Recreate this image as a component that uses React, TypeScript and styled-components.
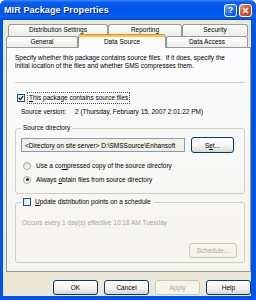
import React from 'react'
import styled, { createGlobalStyle } from 'styled-components'

const GlobalStyle = createGlobalStyle`
  html, body {
    margin: 0;
    padding: 0;
    background: #ffffff;
  }
  body {
    font-family: 'Liberation Sans', Arial, sans-serif;
    font-size: 6.5px;
    color: #000;
  }
`

const Window = styled.div`
  width: 256px;
  height: 300px;
  box-sizing: border-box;
  display: flex;
  flex-direction: column;
  background: #0055e5;
  border-radius: 6px 6px 0 0;
  overflow: hidden;
`

const TitleBar = styled.div`
  height: 20px;
  flex: none;
  display: flex;
  align-items: center;
  padding: 0 4px 0 4px;
  background: linear-gradient(
    to bottom,
    #3d8dff 0%,
    #0a5cf0 12%,
    #0055e8 50%,
    #0061f8 86%,
    #0046cc 100%
  );
`

const Title = styled.span`
  flex: 1;
  color: #fff;
  font-size: 9px;
  font-weight: bold;
  letter-spacing: 0.1px;
  text-shadow: 1px 1px 0 #0a1b8a;
`

const CaptionButton = styled.div<{ $close?: boolean }>`
  width: 13px;
  height: 13px;
  margin-left: 2px;
  box-sizing: border-box;
  border: 1px solid #fff;
  border-radius: 3px;
  display: flex;
  align-items: center;
  justify-content: center;
  color: #fff;
  font-weight: bold;
  font-size: 9px;
  background: ${({ $close }) =>
    $close
      ? 'linear-gradient(135deg, #f0a080 0%, #e05a2c 40%, #c53a10 100%)'
      : 'linear-gradient(135deg, #7ab0ff 0%, #2a72f0 45%, #0a4fd8 100%)'};
`

const Body = styled.div`
  flex: 1;
  margin: 0 5px 4px 3px;
  background: #ece9d8;
  padding: 4px 0 0 3px;
  display: flex;
  flex-direction: column;
`

const TabRow = styled.div<{ $indent?: number; $h: number; $lift?: number }>`
  display: flex;
  align-items: flex-end;
  height: ${({ $h }) => $h}px;
  margin-left: ${({ $indent }) => $indent || 0}px;
  & > div {
    padding-bottom: ${({ $lift }) => $lift || 0}px;
  }
`

const Tab = styled.div<{ $w: number; $active?: boolean }>`
  width: ${({ $w }) => $w}px;
  height: 100%;
  box-sizing: border-box;
  border: 1px solid #919b9c;
  border-bottom: none;
  border-radius: 3px 3px 0 0;
  background: linear-gradient(to bottom, #ffffff, #ecebe6);
  display: flex;
  align-items: center;
  justify-content: center;
  line-height: 8px;
  position: relative;
  ${({ $active }) =>
    $active &&
    `
    height: calc(100% + 3px);
    margin-bottom: -1px;
    z-index: 1;
    background: #fcfcfe;
    border-top: 1px solid #e68b2c;
    box-shadow: inset 0 2px 0 #ffc83c;
    padding-top: 1px;
  `}
`

const Panel = styled.div`
  height: 225px;
  box-sizing: border-box;
  border: 1px solid #919b9c;
  background: linear-gradient(to bottom, #fcfcfe, #f4f3ee);
  padding: 6px 5px 0 8px;
  display: flex;
  flex-direction: column;
`

const Description = styled.p`
  margin: 0;
  line-height: 8px;
`

const Separator = styled.div`
  margin-top: 12px;
  border-top: 1px solid #d0d0bf;
`

const CheckRow = styled.div<{ $top: number; $indent?: number }>`
  display: flex;
  align-items: center;
  height: 9px;
  margin-top: ${({ $top }) => $top}px;
  margin-left: ${({ $indent }) => $indent || 0}px;
`

const CheckBox = styled.div`
  width: 8px;
  height: 8px;
  flex: none;
  box-sizing: border-box;
  border: 1px solid #1c5180;
  background: linear-gradient(135deg, #dcdcd7, #ffffff);
  margin-right: 3px;
  display: flex;
  align-items: center;
  justify-content: center;
`

const Radio = styled.div<{ $checked?: boolean }>`
  width: 8px;
  height: 8px;
  flex: none;
  box-sizing: border-box;
  border-radius: 50%;
  border: 1px solid #a9a99f;
  background: linear-gradient(135deg, #dcdcd7, #ffffff);
  margin-right: 4px;
  display: flex;
  align-items: center;
  justify-content: center;
  &::after {
    content: '';
    display: ${({ $checked }) => ($checked ? 'block' : 'none')};
    width: 3px;
    height: 3px;
    border-radius: 50%;
    background: #2a2a2a;
  }
`

const Label = styled.span<{ $focus?: boolean }>`
  display: inline-block;
  line-height: 8px;
  padding: ${({ $focus }) => ($focus ? '1px 1px' : '0 1px')};
  white-space: pre;
  outline: ${({ $focus }) => ($focus ? '1px dotted #555' : 'none')};
  outline-offset: 0;
`

const InfoRow = styled.div`
  display: flex;
  margin-top: 6px;
  margin-left: 6px;
  line-height: 8px;
`

const InfoLabel = styled.span`
  width: 54px;
`

const Group = styled.fieldset<{ $top: number; $bottom: number }>`
  margin: ${({ $top }) => $top}px 0 0 0;
  padding: 5px 7px ${({ $bottom }) => $bottom}px 5px;
  border: 1px solid #d0d0bf;
  border-radius: 3px;
  min-width: 0;
`

const Legend = styled.legend`
  padding: 0 2px;
  line-height: 8px;
  display: flex;
  align-items: center;
`

const PathRow = styled.div`
  display: flex;
  align-items: center;
  gap: 6px;
`

const PathInput = styled.div`
  width: 164px;
  height: 14px;
  box-sizing: border-box;
  border: 1px solid #7f9db9;
  background: #f1efe6;
  display: flex;
  align-items: center;
  padding-left: 3px;
  white-space: nowrap;
  overflow: hidden;
`

const Button = styled.div<{ $w: number; $h?: number; $disabled?: boolean }>`
  width: ${({ $w }) => $w}px;
  height: ${({ $h }) => $h || 15}px;
  box-sizing: border-box;
  border: 1px solid ${({ $disabled }) => ($disabled ? '#c9c7ba' : '#003c74')};
  border-radius: 3px;
  background: ${({ $disabled }) =>
    $disabled ? '#f5f4ea' : 'linear-gradient(to bottom, #ffffff 0%, #f3f2ee 60%, #d8d5c9 100%)'};
  color: ${({ $disabled }) => ($disabled ? '#aca899' : '#000')};
  display: flex;
  align-items: center;
  justify-content: center;
`

const Muted = styled.p`
  margin: 8px 0 0 1px;
  line-height: 8px;
  color: #aca899;
`

const RightRow = styled.div<{ $top: number }>`
  display: flex;
  justify-content: flex-end;
  gap: 6px;
  margin-top: ${({ $top }) => $top}px;
`

const CheckMark = () => (
  <svg width="6" height="6" viewBox="0 0 6 6">
    <path d="M0.8 3 L2.4 4.6 L5.2 1.2" fill="none" stroke="#222" strokeWidth="1.3" />
  </svg>
)

const CloseGlyph = () => (
  <svg width="7" height="7" viewBox="0 0 7 7">
    <path d="M1 1 L6 6 M6 1 L1 6" stroke="#fff" strokeWidth="1.6" />
  </svg>
)

const u = (s: string, i: number) => (
  <>
    {s.slice(0, i)}
    <u>{s[i]}</u>
    {s.slice(i + 1)}
  </>
)

export default function App() {
  return (
    <>
      <GlobalStyle />
      <Window>
        <TitleBar>
          <Title>MIR Package Properties</Title>
          <CaptionButton>?</CaptionButton>
          <CaptionButton $close>
            <CloseGlyph />
          </CaptionButton>
        </TitleBar>
        <Body>
          <TabRow $indent={2} $h={12} $lift={2}>
            <Tab $w={100}>Distribution Settings</Tab>
            <Tab $w={74}>Reporting</Tab>
            <Tab $w={66}>Security</Tab>
          </TabRow>
          <TabRow $h={11}>
            <Tab $w={72}>General</Tab>
            <Tab $w={88} $active>
              Data Source
            </Tab>
            <Tab $w={82}>Data Access</Tab>
          </TabRow>
          <Panel>
            <Description>
              Specify whether this package contains source files.&nbsp; If it does, specify the
              <br />
              initial location of the files and whether SMS compresses them.
            </Description>
            <Separator />
            <CheckRow $top={10} $indent={2}>
              <CheckBox>
                <CheckMark />
              </CheckBox>
              <Label $focus>{u('This package contains source files', 0)}</Label>
            </CheckRow>
            <InfoRow>
              <InfoLabel>Source version:</InfoLabel>
              <span>2 (Thursday, February 15, 2007 2:01:22 PM)</span>
            </InfoRow>
            <Group $top={8} $bottom={9}>
              <Legend>Source directory</Legend>
              <PathRow>
                <PathInput>&lt;Directory on site server&gt; D:\SMSSource\Enhansoft</PathInput>
                <Button $w={43} $h={16}>
                  {u('Set...', 1)}
                </Button>
              </PathRow>
              <CheckRow $top={8} $indent={2}>
                <Radio />
                <Label>{u('Use a compressed copy of the source directory', 8)}</Label>
              </CheckRow>
              <CheckRow $top={5} $indent={2}>
                <Radio $checked />
                <Label>{u('Always obtain files from source directory', 7)}</Label>
              </CheckRow>
            </Group>
            <Group $top={4} $bottom={4}>
              <Legend>
                <CheckBox />
                <Label>{u('Update distribution points on a schedule', 0)}</Label>
              </Legend>
              <Muted>Occurs every 1 day(s) effective 10:18 AM Tuesday</Muted>
              <RightRow $top={16}>
                <Button $w={48} $disabled>
                  Schedule...
                </Button>
              </RightRow>
            </Group>
          </Panel>
          <RightRow $top={8}>
            <Button $w={45}>OK</Button>
            <Button $w={45}>Cancel</Button>
            <Button $w={45} $disabled>
              Apply
            </Button>
            <Button $w={45}>Help</Button>
          </RightRow>
        </Body>
      </Window>
    </>
  )
}
